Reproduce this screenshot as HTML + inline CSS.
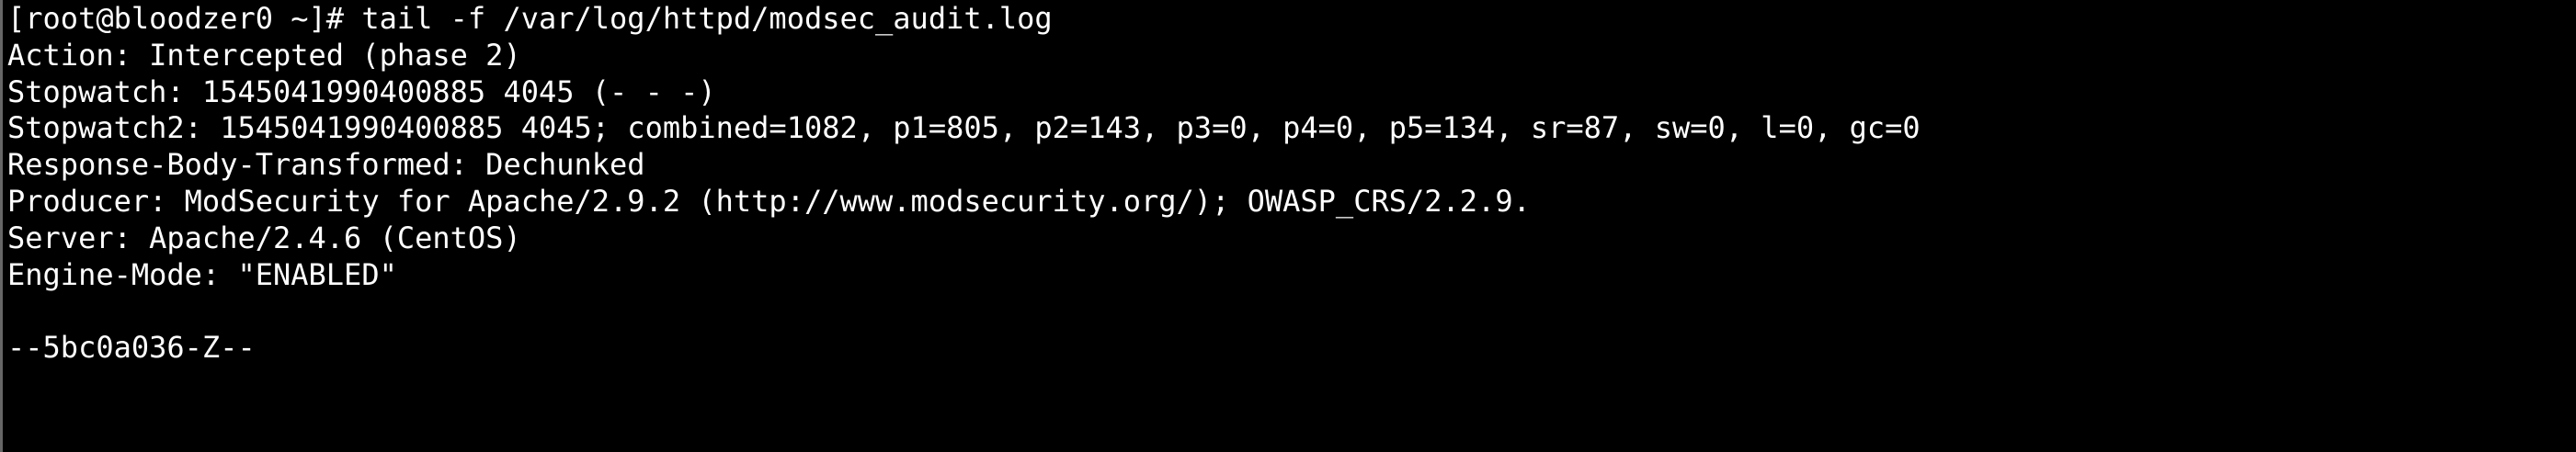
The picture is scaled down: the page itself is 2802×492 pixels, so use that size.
<!DOCTYPE html>
<html><head><style>
html,body{margin:0;padding:0;background:#000;}
body{width:2802px;height:492px;overflow:hidden;position:relative;}
.bar{position:absolute;left:0;top:0;width:3px;height:492px;background:#666;}
pre{position:absolute;left:8px;top:1px;margin:0;color:#fff;font-family:"DejaVu Sans Mono","Liberation Mono",monospace;font-size:32px;line-height:39.8px;}
</style></head><body><div class="bar"></div><pre>[root@bloodzer0 ~]# tail -f /var/log/httpd/modsec_audit.log
Action: Intercepted (phase 2)
Stopwatch: 1545041990400885 4045 (- - -)
Stopwatch2: 1545041990400885 4045; combined=1082, p1=805, p2=143, p3=0, p4=0, p5=134, sr=87, sw=0, l=0, gc=0
Response-Body-Transformed: Dechunked
Producer: ModSecurity for Apache/2.9.2 (http://www.modsecurity.org/); OWASP_CRS/2.2.9.
Server: Apache/2.4.6 (CentOS)
Engine-Mode: "ENABLED"

--5bc0a036-Z--
</pre></body></html>
